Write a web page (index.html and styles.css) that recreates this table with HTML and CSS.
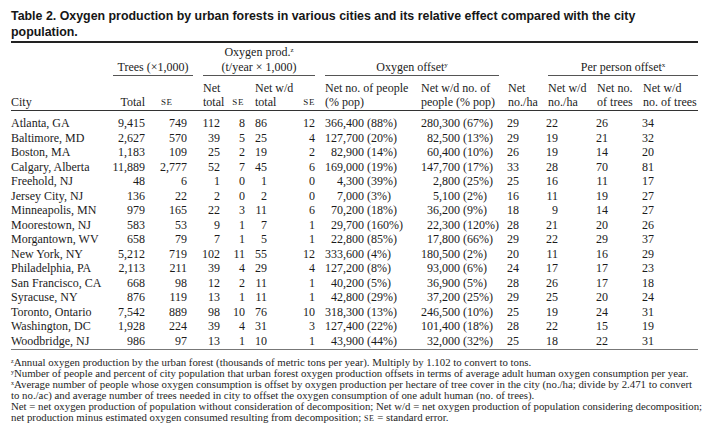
FILE: index.html
```html
<!DOCTYPE html>
<html lang="en">
<head>
<meta charset="utf-8">
<title>Table 2</title>
<link rel="stylesheet" href="styles.css">
</head>
<body>
<div class="page">
  <h1 class="title">Table 2. Oxygen production by urban forests in various cities and its relative effect compared with the city population.</h1>
  <table class="data">
    <colgroup>
      <col class="w-city"><col class="w-tot"><col class="w-se1"><col class="w-net"><col class="w-se2"><col class="w-nwd"><col class="w-se3">
      <col class="w-p1"><col class="w-q1"><col class="w-p2"><col class="w-q2"><col class="w-ha"><col class="w-wha"><col class="w-tr"><col class="w-wtr">
    </colgroup>
    <thead>
      <tr class="grp">
        <th></th>
        <th colspan="2"><div class="gl gl-trees">Trees (×1,000)</div></th>
        <th colspan="4"><div class="gl gl-oxy">Oxygen prod.<sup>z</sup><br>(t/year × 1,000)</div></th>
        <th colspan="4"><div class="gl gl-off">Oxygen offset<sup>y</sup></div></th>
        <th></th>
        <th colspan="3"><div class="gl gl-per">Per person offset<sup>x</sup></div></th>
      </tr>
      <tr class="sub">
        <th class="h-city">City</th>
        <th class="h-total">Total</th>
        <th class="h-se1"><span class="sc">SE</span></th>
        <th class="h-net">Net<br>total</th>
        <th class="h-se2"><span class="sc">SE</span></th>
        <th class="h-nwd">Net w/d<br>total</th>
        <th class="h-se3"><span class="sc">SE</span></th>
        <th colspan="2" class="h-ppl">Net no. of people<br>(% pop)</th>
        <th colspan="2" class="h-wppl">Net w/d no. of<br>people (% pop)</th>
        <th class="h-ha">Net<br>no./ha</th>
        <th class="h-wha">Net w/d<br>no./ha</th>
        <th class="h-tr">Net no.<br>of trees</th>
        <th class="h-wtr">Net w/d<br>no. of trees</th>
      </tr>
    </thead>
    <tbody>
      <tr><td>Atlanta, GA</td><td>9,415</td><td>749</td><td>112</td><td>8</td><td>86</td><td>12</td><td>366,400</td><td>(88%)</td><td>280,300</td><td>(67%)</td><td>29</td><td>22</td><td>26</td><td>34</td></tr>
      <tr><td>Baltimore, MD</td><td>2,627</td><td>570</td><td>39</td><td>5</td><td>25</td><td>4</td><td>127,700</td><td>(20%)</td><td>82,500</td><td>(13%)</td><td>29</td><td>19</td><td>21</td><td>32</td></tr>
      <tr><td>Boston, MA</td><td>1,183</td><td>109</td><td>25</td><td>2</td><td>19</td><td>2</td><td>82,900</td><td>(14%)</td><td>60,400</td><td>(10%)</td><td>26</td><td>19</td><td>14</td><td>20</td></tr>
      <tr><td>Calgary, Alberta</td><td>11,889</td><td>2,777</td><td>52</td><td>7</td><td>45</td><td>6</td><td>169,000</td><td>(19%)</td><td>147,700</td><td>(17%)</td><td>33</td><td>28</td><td>70</td><td>81</td></tr>
      <tr><td>Freehold, NJ</td><td>48</td><td>6</td><td>1</td><td>0</td><td>1</td><td>0</td><td>4,300</td><td>(39%)</td><td>2,800</td><td>(25%)</td><td>25</td><td>16</td><td>11</td><td>17</td></tr>
      <tr><td>Jersey City, NJ</td><td>136</td><td>22</td><td>2</td><td>0</td><td>2</td><td>0</td><td>7,000</td><td>(3%)</td><td>5,100</td><td>(2%)</td><td>16</td><td>11</td><td>19</td><td>27</td></tr>
      <tr><td>Minneapolis, MN</td><td>979</td><td>165</td><td>22</td><td>3</td><td>11</td><td>6</td><td>70,200</td><td>(18%)</td><td>36,200</td><td>(9%)</td><td>18</td><td>9</td><td>14</td><td>27</td></tr>
      <tr><td>Moorestown, NJ</td><td>583</td><td>53</td><td>9</td><td>1</td><td>7</td><td>1</td><td>29,700</td><td>(160%)</td><td>22,300</td><td>(120%)</td><td>28</td><td>21</td><td>20</td><td>26</td></tr>
      <tr><td>Morgantown, WV</td><td>658</td><td>79</td><td>7</td><td>1</td><td>5</td><td>1</td><td>22,800</td><td>(85%)</td><td>17,800</td><td>(66%)</td><td>29</td><td>22</td><td>29</td><td>37</td></tr>
      <tr><td>New York, NY</td><td>5,212</td><td>719</td><td>102</td><td>11</td><td>55</td><td>12</td><td>333,600</td><td>(4%)</td><td>180,500</td><td>(2%)</td><td>20</td><td>11</td><td>16</td><td>29</td></tr>
      <tr><td>Philadelphia, PA</td><td>2,113</td><td>211</td><td>39</td><td>4</td><td>29</td><td>4</td><td>127,200</td><td>(8%)</td><td>93,000</td><td>(6%)</td><td>24</td><td>17</td><td>17</td><td>23</td></tr>
      <tr><td>San Francisco, CA</td><td>668</td><td>98</td><td>12</td><td>2</td><td>11</td><td>1</td><td>40,200</td><td>(5%)</td><td>36,900</td><td>(5%)</td><td>28</td><td>26</td><td>17</td><td>18</td></tr>
      <tr><td>Syracuse, NY</td><td>876</td><td>119</td><td>13</td><td>1</td><td>11</td><td>1</td><td>42,800</td><td>(29%)</td><td>37,200</td><td>(25%)</td><td>29</td><td>25</td><td>20</td><td>24</td></tr>
      <tr><td>Toronto, Ontario</td><td>7,542</td><td>889</td><td>98</td><td>10</td><td>76</td><td>10</td><td>318,300</td><td>(13%)</td><td>246,500</td><td>(10%)</td><td>25</td><td>19</td><td>24</td><td>31</td></tr>
      <tr><td>Washington, DC</td><td>1,928</td><td>224</td><td>39</td><td>4</td><td>31</td><td>3</td><td>127,400</td><td>(22%)</td><td>101,400</td><td>(18%)</td><td>28</td><td>22</td><td>15</td><td>19</td></tr>
      <tr><td>Woodbridge, NJ</td><td>986</td><td>97</td><td>13</td><td>1</td><td>10</td><td>1</td><td>43,900</td><td>(44%)</td><td>32,000</td><td>(32%)</td><td>25</td><td>18</td><td>22</td><td>31</td></tr>
    </tbody>
  </table>
  <div class="notes">
    <p><sup>z</sup>Annual oxygen production by the urban forest (thousands of metric tons per year). Multiply by 1.102 to convert to tons.</p>
    <p><sup>y</sup>Number of people and percent of city population that urban forest oxygen production offsets in terms of average adult human oxygen consumption per year.</p>
    <p><sup>x</sup>Average number of people whose oxygen consumption is offset by oxygen production per hectare of tree cover in the city (no./ha; divide by 2.471 to convert<br>to no./ac) and average number of trees needed in city to offset the oxygen consumption of one adult human (no. of trees).</p>
    <p>Net = net oxygen production of population without consideration of decomposition; Net w/d = net oxygen production of population considering decomposition;<br>net production minus estimated oxygen consumed resulting from decomposition; <span class="sc">SE</span> = standard error.</p>
  </div>
</div>
</body>
</html>
```

FILE: styles.css
```css
* { box-sizing: border-box; }

body {
  margin: 0;
  background: #ffffff;
  color: #1b1b1b;
  font-family: "Liberation Serif", "Times New Roman", serif;
}

.page {
  width: 716px;
  padding: 8px 0 0 11px;
}

.title {
  margin: 0 0 1px;
  width: 687px;
  font-family: "Liberation Sans", Arial, sans-serif;
  font-weight: bold;
  font-size: 12.4px;
  line-height: 16px;
  color: #161616;
}

sup {
  font-size: 7px;
  line-height: 0;
  vertical-align: 4px;
}

.sc {
  font-size: 9px;
  letter-spacing: 0.6px;
}

/* table */
.data {
  border-collapse: separate;
  border-spacing: 0;
  table-layout: fixed;
  width: 687px;
  font-size: 12px;
  border-top: 2px solid #222;
  border-bottom: 1px solid #777;
}

.data th,
.data td {
  padding: 0;
  font-weight: normal;
  white-space: nowrap;
}

.w-city { width: 94px; }
.w-tot { width: 40px; }
.w-se1 { width: 42px; }
.w-net { width: 33px; }
.w-se2 { width: 25px; }
.w-nwd { width: 22px; }
.w-se3 { width: 48px; }
.w-p1 { width: 49px; }
.w-q1 { width: 51px; }
.w-p2 { width: 45px; }
.w-q2 { width: 43px; }
.w-ha { width: 16px; }
.w-wha { width: 39px; }
.w-tr { width: 50px; }
.w-wtr { width: 90px; }

/* group header row */
.grp th {
  padding: 2px 0 4px;
  line-height: 15px;
  vertical-align: bottom;
  text-align: center;
}

.gl {
  border-bottom: 1px solid #555;
}

.gl-trees { margin: 0 -6px 0 8px; }
.gl-oxy { margin: 0 0 0 16px; }
.gl-off { margin: 0 4px 0 10px; }
.gl-per { margin: 0 0 0 29px; }

/* sub header row */
.sub th {
  padding: 1px 0 1px;
  line-height: 14px;
  vertical-align: bottom;
  text-align: left;
  border-bottom: 1px solid #333;
}

.sub .h-total { text-align: right; }
.sub .h-se1 { padding-left: 16px; }
.sub .h-net { padding-left: 16px; }
.sub .h-se2 { text-align: right; padding-right: 1px; }
.sub .h-nwd { padding-left: 10px; }
.sub .h-se3 { text-align: right; }
.sub .h-ppl { padding-left: 10px; }
.sub .h-wppl { padding-left: 6px; }
.sub .h-ha { padding-left: 5px; }
.sub .h-wha { padding-left: 29px; }
.sub .h-tr { padding-left: 39px; }
.sub .h-wtr { padding-left: 35px; }

/* body */
.data td {
  line-height: 14.5px;
  text-align: right;
}

.data td:first-child { text-align: left; }

.data td:nth-child(9),
.data td:nth-child(11) {
  text-align: left;
  padding-left: 3px;
}

.data td:last-child { padding-right: 44px; }

.data tbody tr:first-child td { padding-top: 5px; }
.data tbody tr:last-child td { padding-bottom: 1px; }

/* footnotes */
.notes {
  margin-top: 7px;
  font-size: 10.8px;
  line-height: 11px;
  color: #1e1e1e;
}

.notes p {
  margin: 0;
  white-space: nowrap;
}

.notes sup {
  font-size: 6px;
  vertical-align: 3px;
}

.notes .sc {
  font-size: 8px;
}
```
